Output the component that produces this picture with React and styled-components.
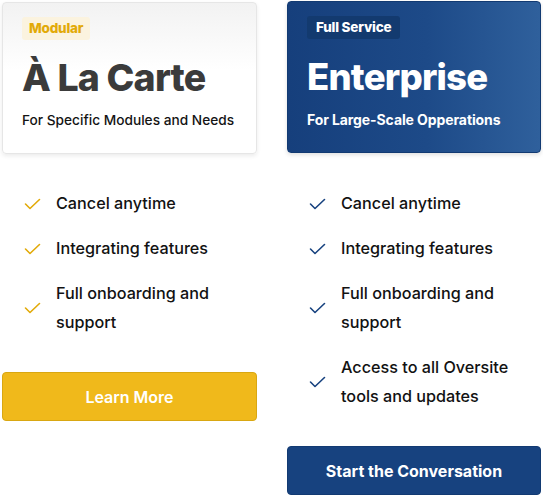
import React from "react";
import styled, { createGlobalStyle } from "styled-components";

const Global = createGlobalStyle`
  body { margin:0; background:#fff; font-family: Inter, "Noto Sans", sans-serif; }
`;

const Page = styled.main`
  width:543px;
  display:grid;
  grid-template-columns:255px 254px;
  column-gap:30px;
  padding:1px 0 0 2px;
  box-sizing:border-box;
`;

const Column = styled.section`
  display:flex; flex-direction:column;
`;

const Card = styled.header`
  height:152px;
  box-sizing:border-box;
  padding:14px 12px 0 19px;
  border-radius:4px;
  margin-top:${p => p.$dark ? "0" : "1px"};
  background:${p => p.$dark
    ? "linear-gradient(90deg, #163f7c 0%, #1d4a88 55%, #2f609c 100%)"
    : "linear-gradient(180deg, #f2f2f2 0%, #fff 45%)"};
  border:1px solid ${p => p.$dark ? "#123a72" : "#e6e6e6"};
  box-shadow:${p => p.$dark ? "0 2px 4px rgba(0,0,0,0.12)" : "0 2px 4px rgba(0,0,0,0.08)"};
`;

const Badge = styled.span`
  display:inline-block;
  height:23px; line-height:23px;
  padding:0 ${p => p.$dark ? "9px" : "7px"};
  border-radius:3px;
  font-family:Inter, sans-serif;
  font-weight:800; font-size:13.5px;
  letter-spacing:-0.2px;
  background:${p => p.$dark ? "#133a6f" : "#fbf3df"};
  color:${p => p.$dark ? "#fff" : "#e2aa08"};
`;

const Title = styled.h1`
  margin:18px 0 0;
  font-family:Inter, sans-serif;
  font-weight:800;
  font-size:${p => p.$dark ? "36.5px" : "37.5px"};
  line-height:40px;
  letter-spacing:-0.8px;
  color:${p => p.$dark ? "#fff" : "#3b3b3b"};
`;

const Sub = styled.p`
  margin:14px 0 0;
  font-size:${p => p.$dark ? "14px" : "13.7px"};
  font-weight:${p => p.$dark ? 700 : 500};
  letter-spacing:${p => p.$dark ? "-0.1px" : "0"};
  white-space:nowrap;
  color:${p => p.$dark ? "#fff" : "#141414"};
`;

const List = styled.ul`
  list-style:none;
  margin:${p => p.$dark ? "36px" : "35px"} 0 0; padding:0 0 0 22px;
  display:flex; flex-direction:column; gap:16px;
`;

const Item = styled.li`
  display:flex; align-items:center; gap:15px;
  font-size:16.2px; font-weight:500; line-height:29px;
  color:#121212;
  span { max-width:180px; }
`;

const Check = ({ color }) => (
  <svg width="17" height="12" viewBox="0 0 17 12" fill="none" style={{ flex: "none" }}>
    <path d="M1.5 6 L6 10.5 L15.5 1.5" stroke={color} strokeWidth="1.6" strokeLinecap="round" strokeLinejoin="round" />
  </svg>
);

const Button = styled.button`
  margin-top:35px;
  height:49px; width:100%;
  border-radius:4px;
  border:1px solid ${p => p.$dark ? "#123a72" : "#d9a712"};
  background:${p => p.$dark ? "#17427f" : "#f0b91b"};
  color:#fff;
  font-family:Inter, sans-serif;
  font-size:16px; font-weight:${p => p.$dark ? 700 : 600};
  cursor:pointer;
`;

const plans = [
  {
    badge: "Modular", title: "À La Carte", sub: "For Specific Modules and Needs",
    check: "#e2aa08", cta: "Learn More",
    items: ["Cancel anytime", "Integrating features", "Full onboarding and support"],
  },
  {
    dark: true, badge: "Full Service", title: "Enterprise", sub: "For Large-Scale Opperations",
    check: "#17427f", cta: "Start the Conversation",
    items: ["Cancel anytime", "Integrating features", "Full onboarding and support", "Access to all Oversite tools and updates"],
  },
];

export default function App() {
  return (
    <>
      <Global />
      <Page>
        {plans.map(p => (
          <Column key={p.title}>
            <Card $dark={p.dark}>
              <Badge $dark={p.dark}>{p.badge}</Badge>
              <Title $dark={p.dark}>{p.title}</Title>
              <Sub $dark={p.dark}>{p.sub}</Sub>
            </Card>
            <List $dark={p.dark}>
              {p.items.map(t => (
                <Item key={t}><Check color={p.check} /><span>{t}</span></Item>
              ))}
            </List>
            <Button $dark={p.dark}>{p.cta}</Button>
          </Column>
        ))}
      </Page>
    </>
  );
}
